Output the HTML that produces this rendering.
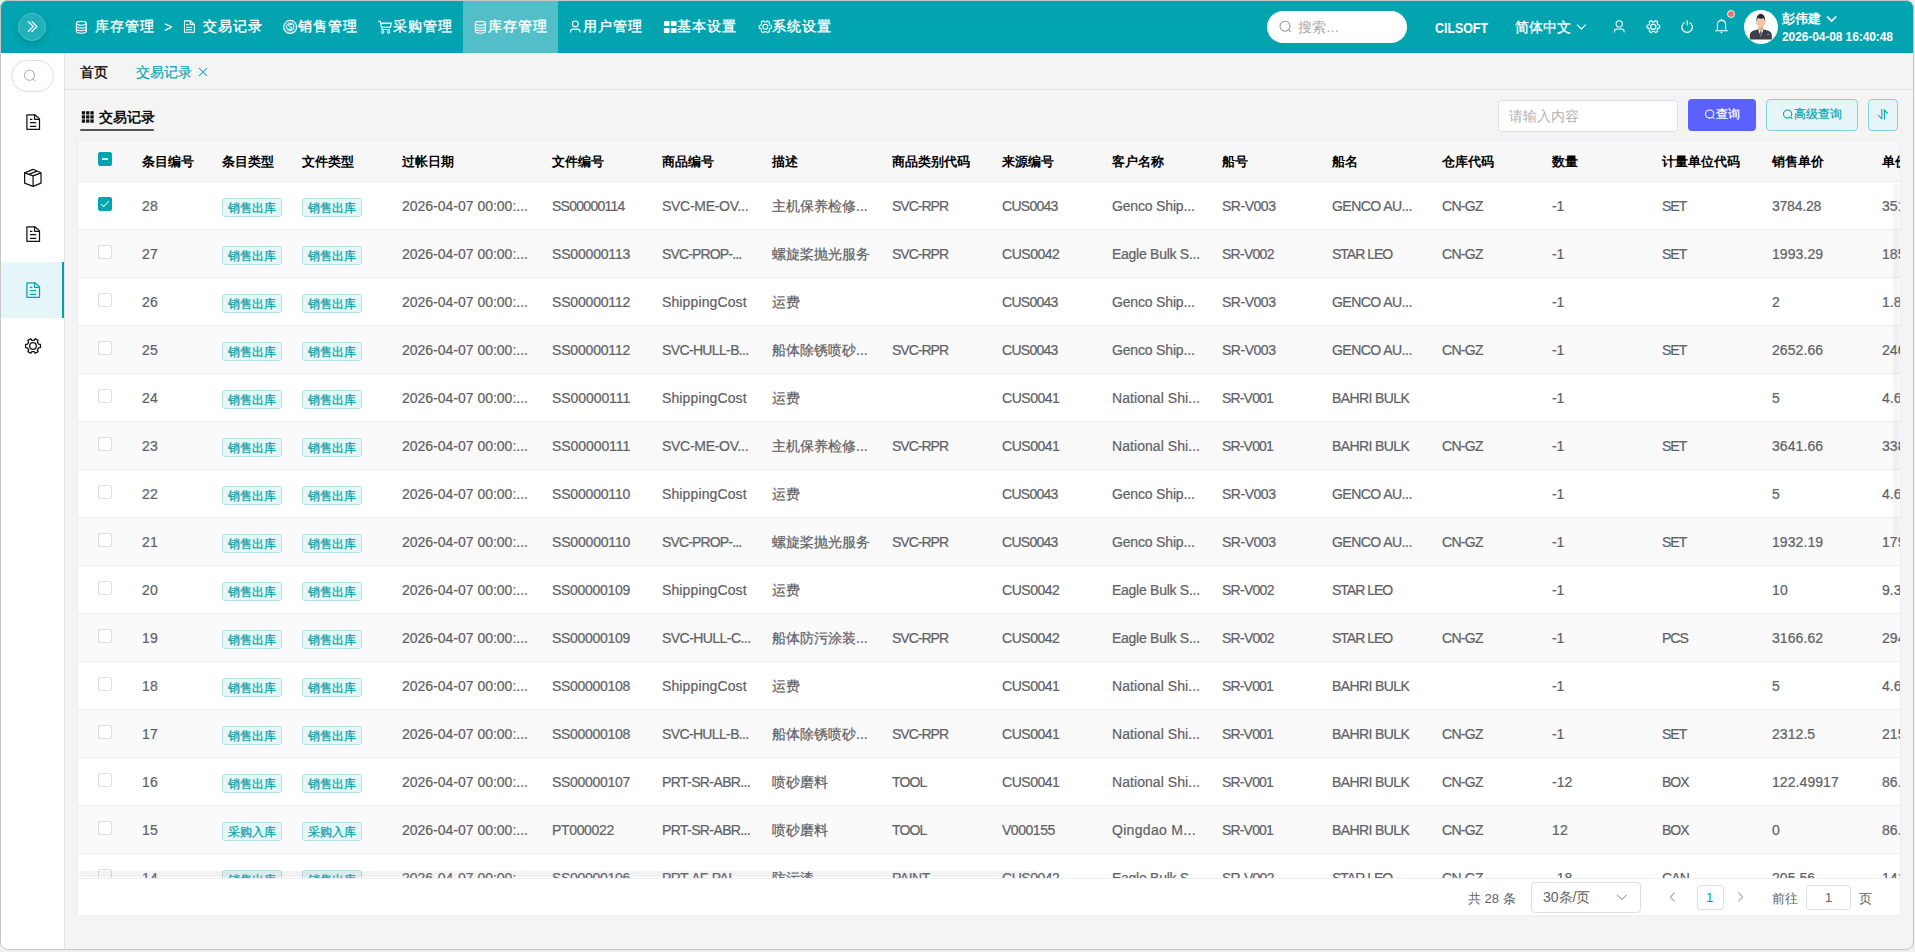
<!DOCTYPE html><html><head><meta charset="utf-8"><style>*{box-sizing:border-box;margin:0;padding:0}
html,body{width:1915px;height:952px;overflow:hidden;background:#f1eeee;font-family:"Liberation Sans",sans-serif}
.abs{position:absolute}
.frame{position:absolute;left:0;top:0;width:1914px;height:950px;border-radius:8px;overflow:hidden;background:#f4f4f4}
.fborder{position:absolute;left:0;top:0;width:1914px;height:950px;border:1px solid #c6c6c6;border-radius:8px;pointer-events:none}
.hdr{position:absolute;left:0;top:0;width:1914px;height:53px;background:#02a4b0;border-radius:8px 8px 0 0}
.t{position:absolute;font-size:15px;line-height:18px;color:#fff;white-space:nowrap}
.n{position:absolute;top:17px;font-size:14px;letter-spacing:1px;line-height:18px;color:#fff;white-space:nowrap;-webkit-text-stroke:0.35px #fff}
.cil{font-size:14px;font-weight:bold;line-height:14px;transform:scaleX(0.885);transform-origin:0 0}
.ts{font-size:12px;font-weight:bold;line-height:14px;letter-spacing:-0.1px}
.navact{position:absolute;left:463px;top:0;width:95px;height:53px;background:#52bfc8}
.toggle{position:absolute;left:18px;top:13px;width:28px;height:28px;border-radius:50%;background:#22b0bb;border:1px solid #50c2cb;box-shadow:0 3px 6px rgba(0,0,0,.10)}
.side{position:absolute;left:0;top:53px;width:65px;height:897px;background:#fff;border-right:1px solid #e3e3e3}
.sact{position:absolute;left:0;top:262px;width:64px;height:56px;background:#e6f5f7;border-right:2px solid #02a4b0}
.spill{position:absolute;left:11px;top:60px;width:43px;height:32px;border:1px solid #dcdfe6;border-radius:16px;background:#fff}
.tabs{position:absolute;left:65px;top:53px;width:1849px;height:37px;border-bottom:1px solid #e2e2e2;background:#f4f4f4}
.tab{position:absolute;top:64px;font-size:14px;line-height:16px;white-space:nowrap;-webkit-text-stroke:0.15px currentColor}
.ttl{font-size:14px;line-height:17px;font-weight:bold;color:#111}
.card{position:absolute;left:77px;top:139px;width:1824px;height:777px;background:#fff;border:1px solid #ebeef5}
.thead{position:absolute;left:78px;top:140px;width:1822px;height:42px;background:#f7f7f7;border-bottom:1px solid #ebeef5}
.tclip{position:absolute;left:0;top:0;width:1900px;height:878px;overflow:hidden}
.th{position:absolute;top:154px;font-size:13px;line-height:16px;font-weight:bold;color:#000;white-space:nowrap}
.tr{position:absolute;left:78px;width:1822px;height:48px;background:#fff;border-bottom:1px solid #ebeef5}
.tr.z{background:#fafafa}
.td{position:absolute;font-size:14px;line-height:16px;color:#5f6266;white-space:nowrap;-webkit-text-stroke:0.22px #5f6266}
.tag{position:absolute;height:19px;padding:0 5px;font-size:12px;line-height:19px;color:#0fa3ae;background:#e7f6f7;border:1px solid #b2e1e5;border-radius:3px;white-space:nowrap;-webkit-text-stroke:0.3px #0fa3ae}
.cb{position:absolute;width:14px;height:14px;border:1px solid #dcdfe6;border-radius:2px;background:#fff}
.cb.on,.cb.ind{background:#02a4b0;border-color:#02a4b0}
.cb.ind::after{content:"";position:absolute;left:3px;top:5px;width:6px;height:2px;background:rgba(255,255,255,.8)}
.cb.on::after{content:"";position:absolute;left:4px;top:1px;width:3px;height:7px;border:1px solid #fff;border-left:0;border-top:0;transform:rotate(45deg)}
.inp{position:absolute;background:#fff;border:1px solid #dcdfe6;border-radius:4px}
.btxt{font-size:12px;line-height:15px;white-space:nowrap}
.pg{font-size:13px;line-height:16px;color:#606266;white-space:nowrap}
</style></head><body><div class="frame">
<div class="hdr"></div>
<div class="toggle"></div>
<svg class="abs" style="left:16px;top:11px" width="30" height="30" viewBox="0 0 30 30"><path d="M12 10.4l5.2 5.2-5.2 5.2M15.6 10.4l5.2 5.2-5.2 5.2" fill="none" stroke="#fff" stroke-width="1.25"/></svg>
<svg class="abs" style="left:72px;top:17px" width="20" height="20" viewBox="0 0 20 20"><g fill="none" stroke="#fff" stroke-width="1.15"><ellipse cx="9.35" cy="6.3" rx="4.95" ry="1.9"/><path d="M4.4 6.3V14.3A4.95 1.9 0 0 0 14.3 14.3V6.3M4.4 9.2A4.95 1.9 0 0 0 14.3 9.2M4.4 11.8A4.95 1.9 0 0 0 14.3 11.8"/></g></svg>
<span class="n" style="left:95px">库存管理</span>
<span class="t" style="left:164px;top:18px;font-size:14px">&gt;</span>
<svg class="abs" style="left:180px;top:17px" width="20" height="20" viewBox="0 0 20 20"><g fill="none" stroke="#fff" stroke-width="1.1"><path d="M4.5 3.9H10.4L14.3 7.4V15.2H4.5Z"/><path d="M10.3 3.9V7.4H14.3M6.1 7.5H8.7M6.1 10.3H12M6.1 12.6H12"/></g></svg>
<span class="n" style="left:203px">交易记录</span>
<svg class="abs" style="left:280px;top:17px" width="20" height="20" viewBox="0 0 20 20"><g fill="none" stroke="#fff"><circle cx="10.2" cy="9.9" r="6.5" stroke-width="1.1"/><circle cx="10.2" cy="9.9" r="5.1" stroke-width="0.6" stroke-dasharray="1.2 0.9" opacity=".8"/><circle cx="10.2" cy="9.9" r="3.7" stroke-width="1"/></g><path d="M11.8 8.1c-.3-.6-.9-.9-1.6-.9-.9 0-1.5.5-1.5 1.2 0 1.6 3.3.9 3.3 2.7 0 .8-.7 1.3-1.7 1.3-.8 0-1.5-.4-1.8-1" fill="none" stroke="#fff" stroke-width="1.05"/></svg>
<span class="n" style="left:298px">销售管理</span>
<svg class="abs" style="left:375px;top:17px" width="20" height="20" viewBox="0 0 20 20"><g fill="none" stroke="#fff" stroke-width="1.15" stroke-linejoin="round"><path d="M3.2 4.4H5.3L6.9 12.5H14.8"/><path d="M5.8 6.1H16.2L15.4 10.3H6.5"/></g><g fill="none" stroke="#fff" stroke-width="1.1"><circle cx="7.6" cy="15" r="1.25"/><circle cx="13.6" cy="15" r="1.25"/></g></svg>
<span class="n" style="left:393px">采购管理</span>
<div class="navact"></div>
<svg class="abs" style="left:470px;top:17px" width="20" height="20" viewBox="0 0 20 20"><g fill="none" stroke="#fff" stroke-width="1.15"><ellipse cx="10.35" cy="6.3" rx="4.95" ry="1.9"/><path d="M5.4 6.3V14.3A4.95 1.9 0 0 0 15.3 14.3V6.3M5.4 9.2A4.95 1.9 0 0 0 15.3 9.2M5.4 11.8A4.95 1.9 0 0 0 15.3 11.8"/></g></svg>
<span class="n" style="left:488px">库存管理</span>
<svg class="abs" style="left:565px;top:17px" width="20" height="20" viewBox="0 0 20 20"><g fill="none" stroke="#fff" stroke-width="1.1"><circle cx="10.3" cy="6.9" r="2.9"/><path d="M5.6 15.5V14.6C5.6 13.1 6.6 12.1 8.1 12.1H12.5C14 12.1 15 13.1 15 14.6V15.5"/></g></svg>
<span class="n" style="left:583px">用户管理</span>
<svg class="abs" style="left:660px;top:17px" width="20" height="20" viewBox="0 0 20 20"><g fill="#fff"><rect x="3.9" y="4" width="5.7" height="4.9" rx="1"/><rect x="10.9" y="4" width="5.7" height="4.9" rx="1"/><rect x="3.9" y="11" width="5.7" height="5" rx="1"/><rect x="10.9" y="11" width="5.7" height="5" rx="1"/></g></svg>
<span class="n" style="left:677px">基本设置</span>
<svg class="abs" style="left:755px;top:17px" width="20" height="20" viewBox="0 0 20 20"><g fill="none" stroke="#fff" stroke-width="1.1" stroke-linejoin="round"><path d="M15.04 8.24 L16.56 8.49 L16.56 11.11 L15.04 11.36 L14.08 13.04 L14.62 14.48 L12.35 15.79 L11.37 14.60 L9.43 14.60 L8.45 15.79 L6.18 14.48 L6.72 13.04 L5.76 11.36 L4.24 11.11 L4.24 8.49 L5.76 8.24 L6.72 6.56 L6.18 5.12 L8.45 3.81 L9.43 5.00 L11.37 5.00 L12.35 3.81 L14.62 5.12 L14.08 6.56Z"/><circle cx="10.3" cy="9.8" r="2.5"/></g></svg>
<span class="n" style="left:772px">系统设置</span>
<div class="abs" style="left:1267px;top:11px;width:140px;height:32px;border-radius:16px;background:#fff"></div>
<svg class="abs" style="left:1273px;top:17px" width="20" height="20" viewBox="0 0 20 20"><g fill="none" stroke="#9a9a9a" stroke-width="1.05"><circle cx="12" cy="9.2" r="5"/><path d="M15.6 12.9L17.6 14.9"/></g></svg>
<span class="t" style="left:1298px;top:18px;color:#a9a9a9;font-size:14px;letter-spacing:0.3px">搜索...</span>
<span class="t cil" style="left:1435px;top:21px">CILSOFT</span>
<span class="t" style="left:1515px;top:18px;font-size:14px;-webkit-text-stroke:0.3px #fff">简体中文</span>
<svg class="abs" style="left:1573px;top:20px" width="16" height="12" viewBox="0 0 16 12"><path d="M4 4.6L8.4 9 12.8 4.6" fill="none" stroke="#fff" stroke-width="1.1"/></svg>
<svg class="abs" style="left:1605px;top:13px" width="30" height="30" viewBox="0 0 30 30"><g fill="none" stroke="#fff" stroke-width="1.05"><circle cx="14.2" cy="10.9" r="3.1"/><path d="M9.4 19.5V18.4C9.4 16.9 10.4 15.9 11.9 15.9H16.6C18.1 15.9 19.1 16.9 19.1 18.4V19.5"/></g></svg>
<svg class="abs" style="left:1640px;top:13px" width="30" height="30" viewBox="0 0 30 30"><g fill="none" stroke="#fff" stroke-width="1.15" stroke-linejoin="round"><path d="M18.04 12.04 L19.66 12.27 L19.66 14.93 L18.04 15.16 L17.08 16.84 L17.68 18.36 L15.38 19.69 L14.37 18.40 L12.43 18.40 L11.42 19.69 L9.12 18.36 L9.72 16.84 L8.76 15.16 L7.14 14.93 L7.14 12.27 L8.76 12.04 L9.72 10.36 L9.12 8.84 L11.42 7.51 L12.43 8.80 L14.37 8.80 L15.38 7.51 L17.68 8.84 L17.08 10.36Z"/><circle cx="13.3" cy="13.7" r="2.6"/></g></svg>
<svg class="abs" style="left:1672px;top:13px" width="30" height="30" viewBox="0 0 30 30"><g fill="none" stroke="#fff" stroke-width="1.15"><path d="M12.7 9.4A5.3 5.3 0 1 0 17.5 9.4"/><path d="M15.2 7.3V12.6"/></g></svg>
<svg class="abs" style="left:1707px;top:5px" width="30" height="30" viewBox="0 0 30 30"><g fill="none" stroke="#fff" stroke-width="1.1"><path d="M10.4 25.4V19.6C10.4 17 12 15.4 14.5 15.4S18.6 17 18.6 19.6V25.4M8.2 25.7H20.8"/></g><circle cx="14.5" cy="14.9" r=".8" fill="#fff"/><circle cx="14.5" cy="27.4" r=".9" fill="#fff"/><circle cx="24" cy="9" r="3.5" fill="#f56c6c" stroke="#fff" stroke-width=".9"/></svg>
<div class="abs" style="left:1744px;top:10px;width:34px;height:34px;border-radius:50%;background:#fff;overflow:hidden">
<svg width="34" height="34" viewBox="0 0 34 34"><path d="M5.8 29.5V25.2c0-2.6 1.6-4 4.2-4.8l4.4-1.2h4.8l4.4 1.2c2.6.8 4.2 2.2 4.2 4.8v4.3z" fill="#3d3f4a"/><path d="M14.2 19.6L16.8 26.8l2.6-7.2z" fill="#fff"/><path d="M16.2 20.6h1.2l.6 5.6-1.2 1.4-1.2-1.4z" fill="#5b606b"/><rect x="23" y="24.2" width="2.6" height=".8" fill="#9aa0a8"/><rect x="14.6" y="15.6" width="4.4" height="4.4" fill="#e2ab8a"/><ellipse cx="16.8" cy="12.4" rx="4.2" ry="5.2" fill="#f1c5a5"/><path d="M12.4 12.2c-.5-4.6 1.4-8.4 4.4-8.4s4.9 3.6 4.4 8.4c-.3-2-1-3.4-1.8-3.9-1.4.6-4 .6-5.4-.2-.7.7-1.3 2-1.6 4.1z" fill="#2b2b2b"/><path d="M12.2 12.8c.2 1 .6 1.4 1 1.4M21.4 12.8c-.2 1-.6 1.4-1 1.4" stroke="#d9a383" stroke-width=".6" fill="none"/></svg></div>
<span class="t" style="left:1782px;top:11px;font-size:13px;font-weight:bold;line-height:16px">彭伟建</span>
<svg class="abs" style="left:1822px;top:12px" width="18" height="12" viewBox="0 0 18 12"><path d="M5 4.4L9.6 9 14.2 4.4" fill="none" stroke="#fff" stroke-width="1.6"/></svg>
<span class="t ts" style="left:1782px;top:30px">2026-04-08 16:40:48</span>
<div class="side"></div>
<div class="spill"></div>
<svg class="abs" style="left:18px;top:63px" width="24" height="24" viewBox="0 0 24 24"><g fill="none" stroke="#a3a5aa" stroke-width="1"><circle cx="11.5" cy="12.2" r="5.1"/><path d="M15.1 15.8L17.4 18.1"/></g></svg>
<div class="sact"></div>
<svg class="abs" style="left:16px;top:111px" width="30" height="30" viewBox="0 0 30 30"><g fill="none" stroke="#111" stroke-width="1.25" stroke-linejoin="round"><path d="M10.9 3.8H18.9L23.5 7.9V18.3H10.9Z"/><path d="M18.6 3.8V8.3H23.5"/><path d="M13.9 8.4H16.4M13.9 11.7H20.2M13.9 15.3H20.2"/></g></svg>
<svg class="abs" style="left:18px;top:163px" width="30" height="30" viewBox="0 0 30 30"><g fill="none" stroke="#111" stroke-width="1.25" stroke-linejoin="round"><path d="M15.1 6.3L23 9.8V20.2L15.1 23.3L6.6 20.2V9.8Z"/><path d="M6.6 9.8L15.1 12.9L23 9.8M15.1 12.9V23.3M10.6 11.4L19 8.2"/></g></svg>
<svg class="abs" style="left:16px;top:223px" width="30" height="30" viewBox="0 0 30 30"><g fill="none" stroke="#111" stroke-width="1.25" stroke-linejoin="round"><path d="M10.9 3.8H18.9L23.5 7.9V18.3H10.9Z"/><path d="M18.6 3.8V8.3H23.5"/><path d="M13.9 8.4H16.4M13.9 11.7H20.2M13.9 15.3H20.2"/></g></svg>
<svg class="abs" style="left:16px;top:279px" width="30" height="30" viewBox="0 0 30 30"><g fill="none" stroke="#02a4b0" stroke-width="1.25" stroke-linejoin="round"><path d="M10.9 3.8H18.9L23.5 7.9V18.3H10.9Z"/><path d="M18.6 3.8V8.3H23.5"/><path d="M13.9 8.4H16.4M13.9 11.7H20.2M13.9 15.3H20.2"/></g></svg>
<svg class="abs" style="left:18px;top:331px" width="30" height="30" viewBox="0 0 30 30"><g fill="none" stroke="#111" stroke-width="1.3" stroke-linejoin="round"><path d="M20.50 13.15 L22.43 13.42 L22.43 16.58 L20.50 16.85 L19.35 18.84 L20.09 20.65 L17.35 22.23 L16.15 20.69 L13.85 20.69 L12.65 22.23 L9.91 20.65 L10.65 18.84 L9.50 16.85 L7.57 16.58 L7.57 13.42 L9.50 13.15 L10.65 11.16 L9.91 9.35 L12.65 7.77 L13.85 9.31 L16.15 9.31 L17.35 7.77 L20.09 9.35 L19.35 11.16Z"/><circle cx="15" cy="15" r="3.3"/></g></svg>
<div class="tabs"></div>
<span class="tab" style="left:80px;color:#000;-webkit-text-stroke:0.3px #000">首页</span>
<span class="tab" style="left:136px;color:#02a4b0">交易记录</span>
<svg class="abs" style="left:195px;top:64px" width="14" height="14" viewBox="0 0 14 14"><path d="M4 4l8 8M12 4l-8 8" stroke="#02a4b0" stroke-width="1.05"/></svg>
<svg class="abs" style="left:80px;top:110px" width="16" height="16" viewBox="0 0 16 16"><g fill="#111"><rect x="1.8" y="1.2" width="3.3" height="3.3"/><rect x="1.8" y="5.3" width="3.3" height="3.3"/><rect x="1.8" y="9.4" width="3.3" height="3.3"/><rect x="6.1" y="1.2" width="3.3" height="3.3"/><rect x="6.1" y="5.3" width="3.3" height="3.3"/><rect x="6.1" y="9.4" width="3.3" height="3.3"/><rect x="10.4" y="1.2" width="3.3" height="3.3"/><rect x="10.4" y="5.3" width="3.3" height="3.3"/><rect x="10.4" y="9.4" width="3.3" height="3.3"/></g></svg>
<span class="abs ttl" style="left:99px;top:109px">交易记录</span>
<div class="abs" style="left:80px;top:129px;width:74px;height:2px;background:#555;border-radius:1px"></div>
<div class="inp" style="left:1498px;top:100px;width:180px;height:32px"></div>
<span class="abs" style="left:1509px;top:108px;font-size:14px;line-height:16px;color:#b3b3b3">请输入内容</span>
<div class="abs" style="left:1688px;top:99px;width:68px;height:32px;border-radius:4px;background:#5b61ff"></div>
<svg class="abs" style="left:1698px;top:102px" width="20" height="20" viewBox="0 0 20 20"><g fill="none" stroke="#fff" stroke-width="1.05"><circle cx="11.6" cy="12" r="4.1"/><path d="M14.6 15.1L16.3 16.8"/></g></svg>
<span class="abs btxt" style="left:1716px;top:107px;color:#fff;-webkit-text-stroke:0.25px #fff">查询</span>
<div class="abs" style="left:1766px;top:99px;width:92px;height:32px;border-radius:4px;background:#e6f5f7;border:1px solid #7fd0d7"></div>
<svg class="abs" style="left:1776px;top:102px" width="20" height="20" viewBox="0 0 20 20"><g fill="none" stroke="#02a4b0" stroke-width="1.05"><circle cx="11.6" cy="12" r="4.1"/><path d="M14.6 15.1L16.3 16.8"/></g></svg>
<span class="abs btxt" style="left:1794px;top:107px;color:#02a4b0;-webkit-text-stroke:0.2px #02a4b0">高级查询</span>
<div class="abs" style="left:1868px;top:99px;width:30px;height:32px;border-radius:4px;background:#e6f5f7;border:1px solid #7fd0d7"></div>
<svg class="abs" style="left:1866px;top:97px" width="34" height="35" viewBox="0 0 34 35"><g fill="none" stroke="#02a4b0" stroke-width="1.1"><path d="M15.8 12.1V22M12.1 18L15.8 22M18.4 22.4V13.2L21.7 16.5"/></g></svg>
<div class="card"></div>
<div class="thead"></div>
<div class="tclip">
<span class="cb ind" style="left:98px;top:152px"></span>
<span class="th" style="left:142px">条目编号</span>
<span class="th" style="left:222px">条目类型</span>
<span class="th" style="left:302px">文件类型</span>
<span class="th" style="left:402px">过帐日期</span>
<span class="th" style="left:552px">文件编号</span>
<span class="th" style="left:662px">商品编号</span>
<span class="th" style="left:772px">描述</span>
<span class="th" style="left:892px">商品类别代码</span>
<span class="th" style="left:1002px">来源编号</span>
<span class="th" style="left:1112px">客户名称</span>
<span class="th" style="left:1222px">船号</span>
<span class="th" style="left:1332px">船名</span>
<span class="th" style="left:1442px">仓库代码</span>
<span class="th" style="left:1552px">数量</span>
<span class="th" style="left:1662px">计量单位代码</span>
<span class="th" style="left:1772px">销售单价</span>
<span class="th" style="left:1882px">单价</span>
<div class="tr" style="top:182px"></div>
<span class="cb on" style="left:98px;top:197px"></span>
<span class="td" style="left:142px;top:198px;letter-spacing:0.20px">28</span>
<span class="tag" style="left:222px;top:198px">销售出库</span>
<span class="tag" style="left:302px;top:198px">销售出库</span>
<span class="td" style="left:402px;top:198px;letter-spacing:-0.01px">2026-04-07 00:00:...</span>
<span class="td" style="left:552px;top:198px;letter-spacing:-0.73px">SS00000114</span>
<span class="td" style="left:662px;top:198px;letter-spacing:-0.29px">SVC-ME-OV...</span>
<span class="td" style="left:772px;top:198px">主机保养检修...</span>
<span class="td" style="left:892px;top:198px;letter-spacing:-1.00px">SVC-RPR</span>
<span class="td" style="left:1002px;top:198px;letter-spacing:-0.72px">CUS0043</span>
<span class="td" style="left:1112px;top:198px;letter-spacing:-0.17px">Genco Ship...</span>
<span class="td" style="left:1222px;top:198px;letter-spacing:-0.48px">SR-V003</span>
<span class="td" style="left:1332px;top:198px;letter-spacing:-0.53px">GENCO AU...</span>
<span class="td" style="left:1442px;top:198px;letter-spacing:-0.70px">CN-GZ</span>
<span class="td" style="left:1552px;top:198px;letter-spacing:-0.10px">-1</span>
<span class="td" style="left:1662px;top:198px;letter-spacing:-1.00px">SET</span>
<span class="td" style="left:1772px;top:198px;letter-spacing:-0.23px">3784.28</span>
<span class="td" style="left:1882px;top:198px;letter-spacing:0.07px">3517.46</span>
<div class="tr z" style="top:230px"></div>
<span class="cb" style="left:98px;top:245px"></span>
<span class="td" style="left:142px;top:246px;letter-spacing:0.20px">27</span>
<span class="tag" style="left:222px;top:246px">销售出库</span>
<span class="tag" style="left:302px;top:246px">销售出库</span>
<span class="td" style="left:402px;top:246px;letter-spacing:-0.01px">2026-04-07 00:00:...</span>
<span class="td" style="left:552px;top:246px;letter-spacing:-0.18px">SS00000113</span>
<span class="td" style="left:662px;top:246px;letter-spacing:-0.85px">SVC-PROP-...</span>
<span class="td" style="left:772px;top:246px">螺旋桨抛光服务</span>
<span class="td" style="left:892px;top:246px;letter-spacing:-1.00px">SVC-RPR</span>
<span class="td" style="left:1002px;top:246px;letter-spacing:-0.47px">CUS0042</span>
<span class="td" style="left:1112px;top:246px;letter-spacing:-0.27px">Eagle Bulk S...</span>
<span class="td" style="left:1222px;top:246px;letter-spacing:-0.73px">SR-V002</span>
<span class="td" style="left:1332px;top:246px;letter-spacing:-1.00px">STAR LEO</span>
<span class="td" style="left:1442px;top:246px;letter-spacing:-0.70px">CN-GZ</span>
<span class="td" style="left:1552px;top:246px;letter-spacing:-0.10px">-1</span>
<span class="td" style="left:1662px;top:246px;letter-spacing:-1.00px">SET</span>
<span class="td" style="left:1772px;top:246px;letter-spacing:0.07px">1993.29</span>
<span class="td" style="left:1882px;top:246px;letter-spacing:0.07px">1852.51</span>
<div class="tr" style="top:278px"></div>
<span class="cb" style="left:98px;top:293px"></span>
<span class="td" style="left:142px;top:294px;letter-spacing:0.20px">26</span>
<span class="tag" style="left:222px;top:294px">销售出库</span>
<span class="tag" style="left:302px;top:294px">销售出库</span>
<span class="td" style="left:402px;top:294px;letter-spacing:-0.01px">2026-04-07 00:00:...</span>
<span class="td" style="left:552px;top:294px;letter-spacing:-0.18px">SS00000112</span>
<span class="td" style="left:662px;top:294px;letter-spacing:0.12px">ShippingCost</span>
<span class="td" style="left:772px;top:294px">运费</span>
<span class="td" style="left:1002px;top:294px;letter-spacing:-0.72px">CUS0043</span>
<span class="td" style="left:1112px;top:294px;letter-spacing:-0.17px">Genco Ship...</span>
<span class="td" style="left:1222px;top:294px;letter-spacing:-0.48px">SR-V003</span>
<span class="td" style="left:1332px;top:294px;letter-spacing:-0.53px">GENCO AU...</span>
<span class="td" style="left:1552px;top:294px;letter-spacing:-0.10px">-1</span>
<span class="td" style="left:1772px;top:294px">2</span>
<span class="td" style="left:1882px;top:294px;letter-spacing:0.03px">1.86</span>
<div class="tr z" style="top:326px"></div>
<span class="cb" style="left:98px;top:341px"></span>
<span class="td" style="left:142px;top:342px;letter-spacing:0.20px">25</span>
<span class="tag" style="left:222px;top:342px">销售出库</span>
<span class="tag" style="left:302px;top:342px">销售出库</span>
<span class="td" style="left:402px;top:342px;letter-spacing:-0.01px">2026-04-07 00:00:...</span>
<span class="td" style="left:552px;top:342px;letter-spacing:-0.18px">SS00000112</span>
<span class="td" style="left:662px;top:342px;letter-spacing:-0.64px">SVC-HULL-B...</span>
<span class="td" style="left:772px;top:342px">船体除锈喷砂...</span>
<span class="td" style="left:892px;top:342px;letter-spacing:-1.00px">SVC-RPR</span>
<span class="td" style="left:1002px;top:342px;letter-spacing:-0.72px">CUS0043</span>
<span class="td" style="left:1112px;top:342px;letter-spacing:-0.17px">Genco Ship...</span>
<span class="td" style="left:1222px;top:342px;letter-spacing:-0.48px">SR-V003</span>
<span class="td" style="left:1332px;top:342px;letter-spacing:-0.53px">GENCO AU...</span>
<span class="td" style="left:1442px;top:342px;letter-spacing:-0.70px">CN-GZ</span>
<span class="td" style="left:1552px;top:342px;letter-spacing:-0.10px">-1</span>
<span class="td" style="left:1662px;top:342px;letter-spacing:-1.00px">SET</span>
<span class="td" style="left:1772px;top:342px;letter-spacing:0.07px">2652.66</span>
<span class="td" style="left:1882px;top:342px;letter-spacing:0.07px">2464.88</span>
<div class="tr" style="top:374px"></div>
<span class="cb" style="left:98px;top:389px"></span>
<span class="td" style="left:142px;top:390px;letter-spacing:0.20px">24</span>
<span class="tag" style="left:222px;top:390px">销售出库</span>
<span class="tag" style="left:302px;top:390px">销售出库</span>
<span class="td" style="left:402px;top:390px;letter-spacing:-0.01px">2026-04-07 00:00:...</span>
<span class="td" style="left:552px;top:390px;letter-spacing:-0.07px">SS00000111</span>
<span class="td" style="left:662px;top:390px;letter-spacing:0.12px">ShippingCost</span>
<span class="td" style="left:772px;top:390px">运费</span>
<span class="td" style="left:1002px;top:390px;letter-spacing:-0.47px">CUS0041</span>
<span class="td" style="left:1112px;top:390px;letter-spacing:0.06px">National Shi...</span>
<span class="td" style="left:1222px;top:390px;letter-spacing:-0.83px">SR-V001</span>
<span class="td" style="left:1332px;top:390px;letter-spacing:-0.60px">BAHRI BULK</span>
<span class="td" style="left:1552px;top:390px;letter-spacing:-0.10px">-1</span>
<span class="td" style="left:1772px;top:390px">5</span>
<span class="td" style="left:1882px;top:390px;letter-spacing:0.03px">4.65</span>
<div class="tr z" style="top:422px"></div>
<span class="cb" style="left:98px;top:437px"></span>
<span class="td" style="left:142px;top:438px;letter-spacing:0.20px">23</span>
<span class="tag" style="left:222px;top:438px">销售出库</span>
<span class="tag" style="left:302px;top:438px">销售出库</span>
<span class="td" style="left:402px;top:438px;letter-spacing:-0.01px">2026-04-07 00:00:...</span>
<span class="td" style="left:552px;top:438px;letter-spacing:-0.07px">SS00000111</span>
<span class="td" style="left:662px;top:438px;letter-spacing:-0.29px">SVC-ME-OV...</span>
<span class="td" style="left:772px;top:438px">主机保养检修...</span>
<span class="td" style="left:892px;top:438px;letter-spacing:-1.00px">SVC-RPR</span>
<span class="td" style="left:1002px;top:438px;letter-spacing:-0.47px">CUS0041</span>
<span class="td" style="left:1112px;top:438px;letter-spacing:0.06px">National Shi...</span>
<span class="td" style="left:1222px;top:438px;letter-spacing:-0.83px">SR-V001</span>
<span class="td" style="left:1332px;top:438px;letter-spacing:-0.60px">BAHRI BULK</span>
<span class="td" style="left:1442px;top:438px;letter-spacing:-0.70px">CN-GZ</span>
<span class="td" style="left:1552px;top:438px;letter-spacing:-0.10px">-1</span>
<span class="td" style="left:1662px;top:438px;letter-spacing:-1.00px">SET</span>
<span class="td" style="left:1772px;top:438px;letter-spacing:0.07px">3641.66</span>
<span class="td" style="left:1882px;top:438px;letter-spacing:0.07px">3384.54</span>
<div class="tr" style="top:470px"></div>
<span class="cb" style="left:98px;top:485px"></span>
<span class="td" style="left:142px;top:486px;letter-spacing:0.20px">22</span>
<span class="tag" style="left:222px;top:486px">销售出库</span>
<span class="tag" style="left:302px;top:486px">销售出库</span>
<span class="td" style="left:402px;top:486px;letter-spacing:-0.01px">2026-04-07 00:00:...</span>
<span class="td" style="left:552px;top:486px;letter-spacing:-0.18px">SS00000110</span>
<span class="td" style="left:662px;top:486px;letter-spacing:0.12px">ShippingCost</span>
<span class="td" style="left:772px;top:486px">运费</span>
<span class="td" style="left:1002px;top:486px;letter-spacing:-0.72px">CUS0043</span>
<span class="td" style="left:1112px;top:486px;letter-spacing:-0.17px">Genco Ship...</span>
<span class="td" style="left:1222px;top:486px;letter-spacing:-0.48px">SR-V003</span>
<span class="td" style="left:1332px;top:486px;letter-spacing:-0.53px">GENCO AU...</span>
<span class="td" style="left:1552px;top:486px;letter-spacing:-0.10px">-1</span>
<span class="td" style="left:1772px;top:486px">5</span>
<span class="td" style="left:1882px;top:486px;letter-spacing:0.03px">4.65</span>
<div class="tr z" style="top:518px"></div>
<span class="cb" style="left:98px;top:533px"></span>
<span class="td" style="left:142px;top:534px;letter-spacing:0.20px">21</span>
<span class="tag" style="left:222px;top:534px">销售出库</span>
<span class="tag" style="left:302px;top:534px">销售出库</span>
<span class="td" style="left:402px;top:534px;letter-spacing:-0.01px">2026-04-07 00:00:...</span>
<span class="td" style="left:552px;top:534px;letter-spacing:-0.18px">SS00000110</span>
<span class="td" style="left:662px;top:534px;letter-spacing:-0.85px">SVC-PROP-...</span>
<span class="td" style="left:772px;top:534px">螺旋桨抛光服务</span>
<span class="td" style="left:892px;top:534px;letter-spacing:-1.00px">SVC-RPR</span>
<span class="td" style="left:1002px;top:534px;letter-spacing:-0.72px">CUS0043</span>
<span class="td" style="left:1112px;top:534px;letter-spacing:-0.17px">Genco Ship...</span>
<span class="td" style="left:1222px;top:534px;letter-spacing:-0.48px">SR-V003</span>
<span class="td" style="left:1332px;top:534px;letter-spacing:-0.53px">GENCO AU...</span>
<span class="td" style="left:1442px;top:534px;letter-spacing:-0.70px">CN-GZ</span>
<span class="td" style="left:1552px;top:534px;letter-spacing:-0.10px">-1</span>
<span class="td" style="left:1662px;top:534px;letter-spacing:-1.00px">SET</span>
<span class="td" style="left:1772px;top:534px;letter-spacing:0.07px">1932.19</span>
<span class="td" style="left:1882px;top:534px;letter-spacing:0.07px">1795.73</span>
<div class="tr" style="top:566px"></div>
<span class="cb" style="left:98px;top:581px"></span>
<span class="td" style="left:142px;top:582px;letter-spacing:0.20px">20</span>
<span class="tag" style="left:222px;top:582px">销售出库</span>
<span class="tag" style="left:302px;top:582px">销售出库</span>
<span class="td" style="left:402px;top:582px;letter-spacing:-0.01px">2026-04-07 00:00:...</span>
<span class="td" style="left:552px;top:582px;letter-spacing:-0.30px">SS00000109</span>
<span class="td" style="left:662px;top:582px;letter-spacing:0.12px">ShippingCost</span>
<span class="td" style="left:772px;top:582px">运费</span>
<span class="td" style="left:1002px;top:582px;letter-spacing:-0.47px">CUS0042</span>
<span class="td" style="left:1112px;top:582px;letter-spacing:-0.27px">Eagle Bulk S...</span>
<span class="td" style="left:1222px;top:582px;letter-spacing:-0.73px">SR-V002</span>
<span class="td" style="left:1332px;top:582px;letter-spacing:-1.00px">STAR LEO</span>
<span class="td" style="left:1552px;top:582px;letter-spacing:-0.10px">-1</span>
<span class="td" style="left:1772px;top:582px;letter-spacing:0.20px">10</span>
<span class="td" style="left:1882px;top:582px;letter-spacing:0.03px">9.30</span>
<div class="tr z" style="top:614px"></div>
<span class="cb" style="left:98px;top:629px"></span>
<span class="td" style="left:142px;top:630px;letter-spacing:0.20px">19</span>
<span class="tag" style="left:222px;top:630px">销售出库</span>
<span class="tag" style="left:302px;top:630px">销售出库</span>
<span class="td" style="left:402px;top:630px;letter-spacing:-0.01px">2026-04-07 00:00:...</span>
<span class="td" style="left:552px;top:630px;letter-spacing:-0.30px">SS00000109</span>
<span class="td" style="left:662px;top:630px;letter-spacing:-0.55px">SVC-HULL-C...</span>
<span class="td" style="left:772px;top:630px">船体防污涂装...</span>
<span class="td" style="left:892px;top:630px;letter-spacing:-1.00px">SVC-RPR</span>
<span class="td" style="left:1002px;top:630px;letter-spacing:-0.47px">CUS0042</span>
<span class="td" style="left:1112px;top:630px;letter-spacing:-0.27px">Eagle Bulk S...</span>
<span class="td" style="left:1222px;top:630px;letter-spacing:-0.73px">SR-V002</span>
<span class="td" style="left:1332px;top:630px;letter-spacing:-1.00px">STAR LEO</span>
<span class="td" style="left:1442px;top:630px;letter-spacing:-0.70px">CN-GZ</span>
<span class="td" style="left:1552px;top:630px;letter-spacing:-0.10px">-1</span>
<span class="td" style="left:1662px;top:630px;letter-spacing:-1.00px">PCS</span>
<span class="td" style="left:1772px;top:630px;letter-spacing:0.07px">3166.62</span>
<span class="td" style="left:1882px;top:630px;letter-spacing:0.07px">2942.45</span>
<div class="tr" style="top:662px"></div>
<span class="cb" style="left:98px;top:677px"></span>
<span class="td" style="left:142px;top:678px;letter-spacing:0.20px">18</span>
<span class="tag" style="left:222px;top:678px">销售出库</span>
<span class="tag" style="left:302px;top:678px">销售出库</span>
<span class="td" style="left:402px;top:678px;letter-spacing:-0.01px">2026-04-07 00:00:...</span>
<span class="td" style="left:552px;top:678px;letter-spacing:-0.30px">SS00000108</span>
<span class="td" style="left:662px;top:678px;letter-spacing:0.12px">ShippingCost</span>
<span class="td" style="left:772px;top:678px">运费</span>
<span class="td" style="left:1002px;top:678px;letter-spacing:-0.47px">CUS0041</span>
<span class="td" style="left:1112px;top:678px;letter-spacing:0.06px">National Shi...</span>
<span class="td" style="left:1222px;top:678px;letter-spacing:-0.83px">SR-V001</span>
<span class="td" style="left:1332px;top:678px;letter-spacing:-0.60px">BAHRI BULK</span>
<span class="td" style="left:1552px;top:678px;letter-spacing:-0.10px">-1</span>
<span class="td" style="left:1772px;top:678px">5</span>
<span class="td" style="left:1882px;top:678px;letter-spacing:0.03px">4.65</span>
<div class="tr z" style="top:710px"></div>
<span class="cb" style="left:98px;top:725px"></span>
<span class="td" style="left:142px;top:726px;letter-spacing:0.20px">17</span>
<span class="tag" style="left:222px;top:726px">销售出库</span>
<span class="tag" style="left:302px;top:726px">销售出库</span>
<span class="td" style="left:402px;top:726px;letter-spacing:-0.01px">2026-04-07 00:00:...</span>
<span class="td" style="left:552px;top:726px;letter-spacing:-0.30px">SS00000108</span>
<span class="td" style="left:662px;top:726px;letter-spacing:-0.64px">SVC-HULL-B...</span>
<span class="td" style="left:772px;top:726px">船体除锈喷砂...</span>
<span class="td" style="left:892px;top:726px;letter-spacing:-1.00px">SVC-RPR</span>
<span class="td" style="left:1002px;top:726px;letter-spacing:-0.47px">CUS0041</span>
<span class="td" style="left:1112px;top:726px;letter-spacing:0.06px">National Shi...</span>
<span class="td" style="left:1222px;top:726px;letter-spacing:-0.83px">SR-V001</span>
<span class="td" style="left:1332px;top:726px;letter-spacing:-0.60px">BAHRI BULK</span>
<span class="td" style="left:1442px;top:726px;letter-spacing:-0.70px">CN-GZ</span>
<span class="td" style="left:1552px;top:726px;letter-spacing:-0.10px">-1</span>
<span class="td" style="left:1662px;top:726px;letter-spacing:-1.00px">SET</span>
<span class="td" style="left:1772px;top:726px;letter-spacing:0.06px">2312.5</span>
<span class="td" style="left:1882px;top:726px;letter-spacing:0.07px">2150.36</span>
<div class="tr" style="top:758px"></div>
<span class="cb" style="left:98px;top:773px"></span>
<span class="td" style="left:142px;top:774px;letter-spacing:0.20px">16</span>
<span class="tag" style="left:222px;top:774px">销售出库</span>
<span class="tag" style="left:302px;top:774px">销售出库</span>
<span class="td" style="left:402px;top:774px;letter-spacing:-0.01px">2026-04-07 00:00:...</span>
<span class="td" style="left:552px;top:774px;letter-spacing:-0.30px">SS00000107</span>
<span class="td" style="left:662px;top:774px;letter-spacing:-0.62px">PRT-SR-ABR...</span>
<span class="td" style="left:772px;top:774px">喷砂磨料</span>
<span class="td" style="left:892px;top:774px;letter-spacing:-0.83px">TOOL</span>
<span class="td" style="left:1002px;top:774px;letter-spacing:-0.47px">CUS0041</span>
<span class="td" style="left:1112px;top:774px;letter-spacing:0.06px">National Shi...</span>
<span class="td" style="left:1222px;top:774px;letter-spacing:-0.83px">SR-V001</span>
<span class="td" style="left:1332px;top:774px;letter-spacing:-0.60px">BAHRI BULK</span>
<span class="td" style="left:1442px;top:774px;letter-spacing:-0.70px">CN-GZ</span>
<span class="td" style="left:1552px;top:774px">-12</span>
<span class="td" style="left:1662px;top:774px;letter-spacing:-1.00px">BOX</span>
<span class="td" style="left:1772px;top:774px;letter-spacing:0.07px">122.49917</span>
<span class="td" style="left:1882px;top:774px;letter-spacing:0.05px">86.13</span>
<div class="tr z" style="top:806px"></div>
<span class="cb" style="left:98px;top:821px"></span>
<span class="td" style="left:142px;top:822px;letter-spacing:0.20px">15</span>
<span class="tag" style="left:222px;top:822px">采购入库</span>
<span class="tag" style="left:302px;top:822px">采购入库</span>
<span class="td" style="left:402px;top:822px;letter-spacing:-0.01px">2026-04-07 00:00:...</span>
<span class="td" style="left:552px;top:822px;letter-spacing:-0.34px">PT000022</span>
<span class="td" style="left:662px;top:822px;letter-spacing:-0.62px">PRT-SR-ABR...</span>
<span class="td" style="left:772px;top:822px">喷砂磨料</span>
<span class="td" style="left:892px;top:822px;letter-spacing:-0.83px">TOOL</span>
<span class="td" style="left:1002px;top:822px;letter-spacing:-0.47px">V000155</span>
<span class="td" style="left:1112px;top:822px;letter-spacing:0.31px">Qingdao M...</span>
<span class="td" style="left:1222px;top:822px;letter-spacing:-0.83px">SR-V001</span>
<span class="td" style="left:1332px;top:822px;letter-spacing:-0.60px">BAHRI BULK</span>
<span class="td" style="left:1442px;top:822px;letter-spacing:-0.70px">CN-GZ</span>
<span class="td" style="left:1552px;top:822px;letter-spacing:0.20px">12</span>
<span class="td" style="left:1662px;top:822px;letter-spacing:-1.00px">BOX</span>
<span class="td" style="left:1772px;top:822px">0</span>
<span class="td" style="left:1882px;top:822px;letter-spacing:0.05px">86.13</span>
<div class="tr" style="top:854px"></div>
<span class="cb" style="left:98px;top:869px"></span>
<span class="td" style="left:142px;top:870px;letter-spacing:0.20px">14</span>
<span class="tag" style="left:222px;top:870px">销售出库</span>
<span class="tag" style="left:302px;top:870px">销售出库</span>
<span class="td" style="left:402px;top:870px;letter-spacing:-0.01px">2026-04-07 00:00:...</span>
<span class="td" style="left:552px;top:870px;letter-spacing:-0.30px">SS00000106</span>
<span class="td" style="left:662px;top:870px;letter-spacing:-0.62px">PRT-AF-PAI...</span>
<span class="td" style="left:772px;top:870px">防污漆</span>
<span class="td" style="left:892px;top:870px;letter-spacing:-0.50px">PAINT</span>
<span class="td" style="left:1002px;top:870px;letter-spacing:-0.47px">CUS0042</span>
<span class="td" style="left:1112px;top:870px;letter-spacing:-0.27px">Eagle Bulk S...</span>
<span class="td" style="left:1222px;top:870px;letter-spacing:-0.73px">SR-V002</span>
<span class="td" style="left:1332px;top:870px;letter-spacing:-1.00px">STAR LEO</span>
<span class="td" style="left:1442px;top:870px;letter-spacing:-0.70px">CN-GZ</span>
<span class="td" style="left:1552px;top:870px">-18</span>
<span class="td" style="left:1662px;top:870px;letter-spacing:-0.90px">CAN</span>
<span class="td" style="left:1772px;top:870px;letter-spacing:0.06px">205.56</span>
<span class="td" style="left:1882px;top:870px;letter-spacing:0.06px">141.12</span>
<div class="abs" style="left:1893px;top:184px;width:6px;height:353px;border-radius:3px;background:rgba(144,147,153,.09)"></div>
<div class="abs" style="left:79px;top:871px;width:958px;height:6px;border-radius:3px;background:rgba(144,147,160,.12)"></div>
</div>
<div class="abs" style="left:78px;top:878px;width:1822px;height:1px;background:#ebeef5"></div>
<span class="abs pg" style="left:1468px;top:891px">共 28 条</span>
<div class="inp" style="left:1531px;top:882px;width:110px;height:31px"></div>
<span class="abs pg" style="left:1543px;top:889px;font-size:14px">30条/页</span>
<svg class="abs" style="left:1612px;top:887px" width="20" height="20" viewBox="0 0 20 20"><path d="M5 7.8L9.8 12.4 14.6 7.8" fill="none" stroke="#a8abb2" stroke-width="1.1"/></svg>
<svg class="abs" style="left:1664px;top:887px" width="16" height="20" viewBox="0 0 16 20"><path d="M10.6 5.6L6.4 10 10.6 14.4" fill="none" stroke="#a8abb2" stroke-width="1.1"/></svg>
<div class="inp" style="left:1697px;top:885px;width:27px;height:25px;border-radius:3px"></div>
<span class="abs pg" style="left:1706px;top:890px;color:#02a4b0">1</span>
<svg class="abs" style="left:1733px;top:887px" width="16" height="20" viewBox="0 0 16 20"><path d="M5.4 5.6L9.6 10 5.4 14.4" fill="none" stroke="#a8abb2" stroke-width="1.1"/></svg>
<span class="abs pg" style="left:1772px;top:891px">前往</span>
<div class="inp" style="left:1806px;top:885px;width:45px;height:25px;border-radius:3px"></div>
<span class="abs pg" style="left:1825px;top:890px">1</span>
<span class="abs pg" style="left:1859px;top:891px">页</span>
</div>
<div class="fborder"></div></body></html>
